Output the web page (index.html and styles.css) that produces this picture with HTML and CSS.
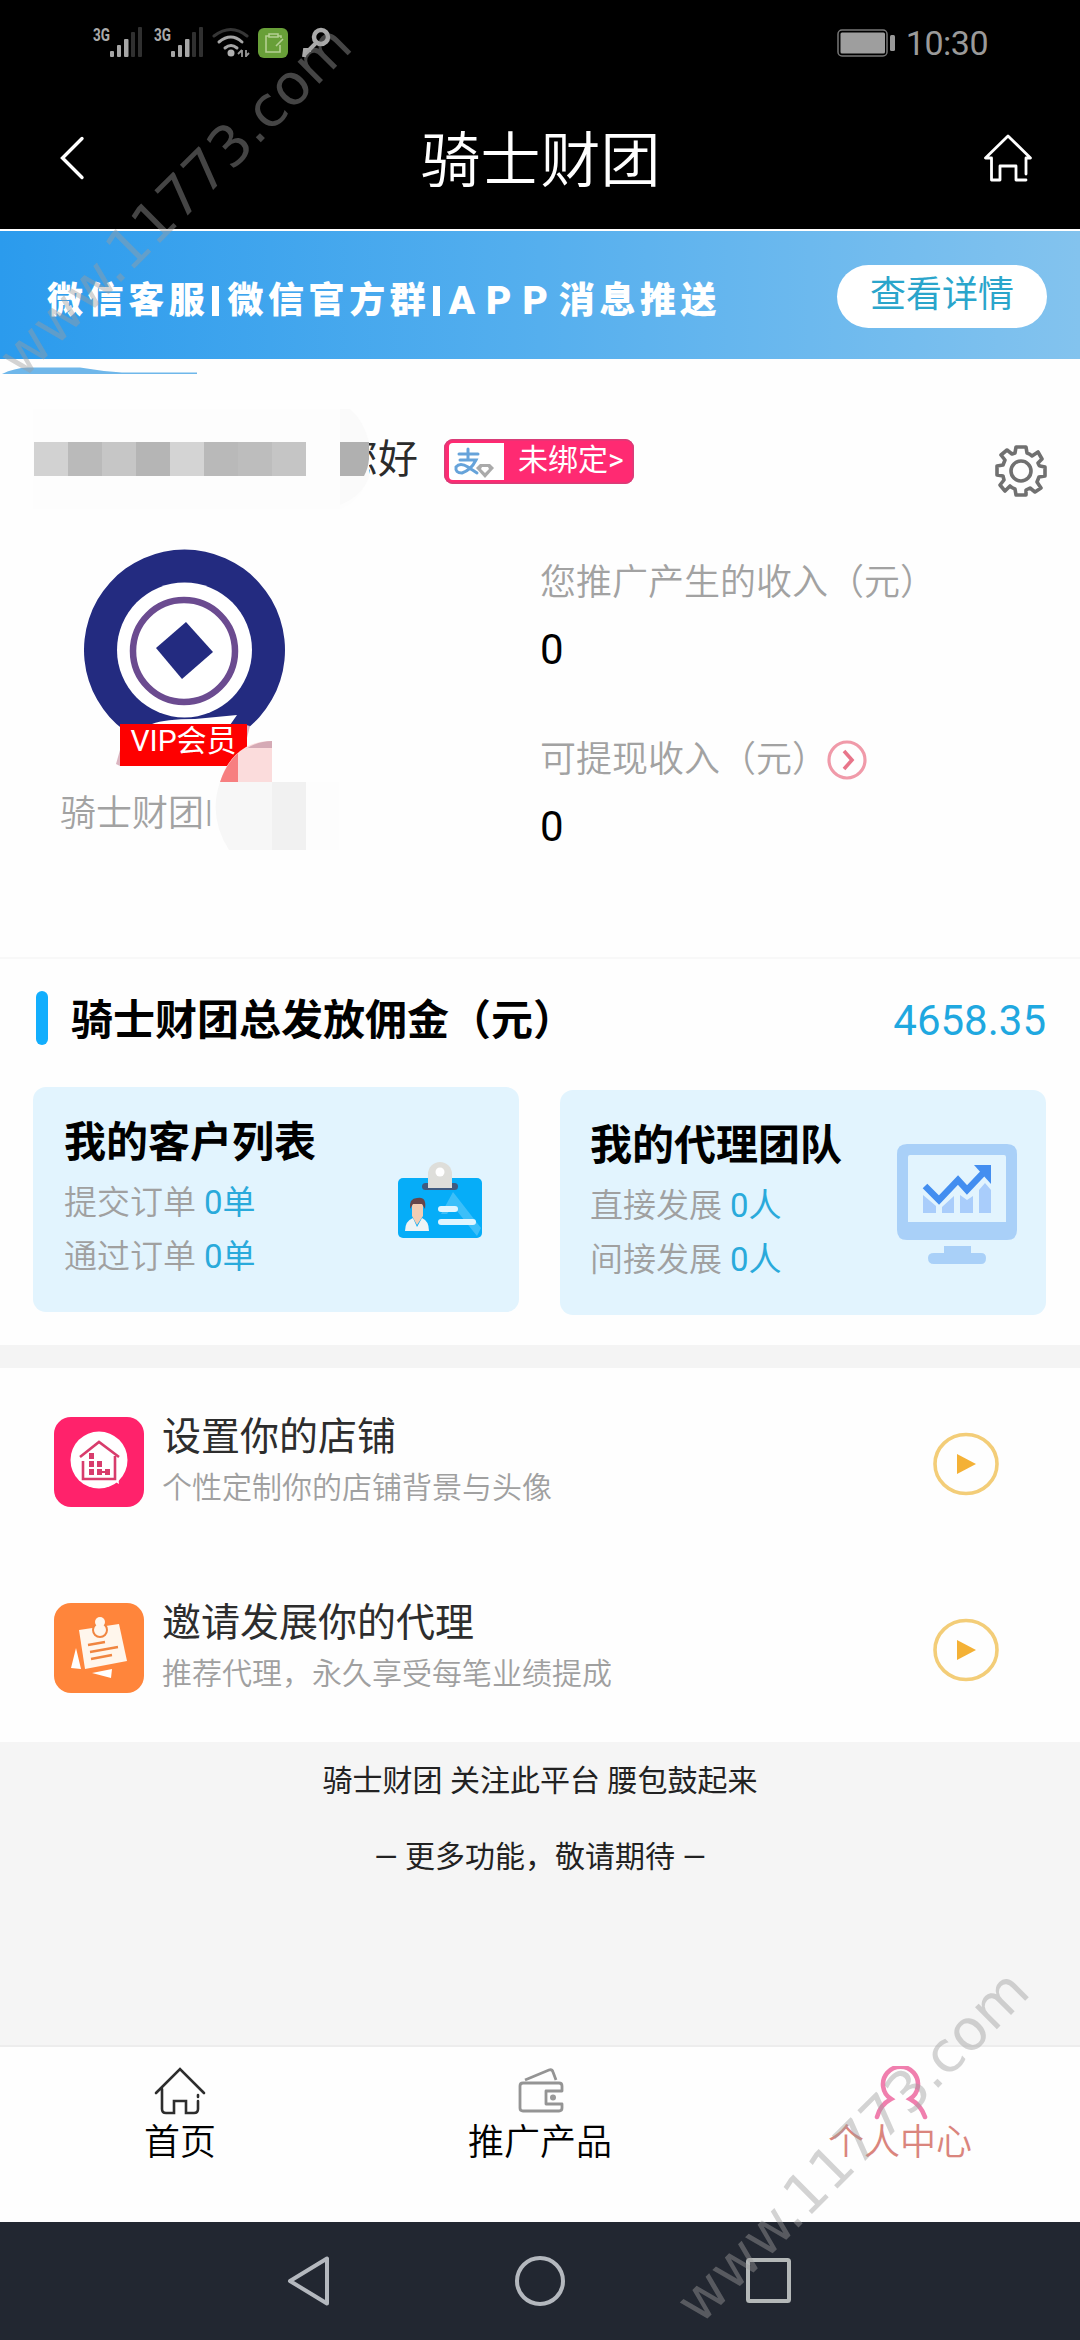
FILE: index.html
```html
<!DOCTYPE html>
<html lang="zh-CN">
<head>
<meta charset="utf-8">
<title>骑士财团</title>
<link rel="stylesheet" href="styles.css">
</head>
<body>
<div class="screen">
  <div class="status">
    <svg class="status-icons" width="256" height="40" viewBox="90 22 256 40">
      <g fill="#aaa" font-family="Roboto" font-size="19" font-weight="700">
        <text x="93" y="41" textLength="17" lengthAdjust="spacingAndGlyphs">3G</text>
        <text x="154" y="41" textLength="17" lengthAdjust="spacingAndGlyphs">3G</text>
      </g>
      <g fill="#a6a6a6">
        <rect x="110" y="51" width="4" height="6" rx="1"/><rect x="117" y="45" width="4" height="12" rx="1"/><rect x="124" y="39" width="4.500" height="18" rx="1"/>
        <rect x="171" y="51" width="4" height="6" rx="1"/><rect x="178" y="45" width="4" height="12" rx="1"/><rect x="185" y="39" width="4.500" height="18" rx="1"/>
      </g>
      <g fill="#303030">
        <rect x="131" y="32" width="4" height="25" rx="1"/><rect x="138" y="27" width="4" height="30" rx="1"/>
        <rect x="192" y="32" width="4" height="25" rx="1"/><rect x="199" y="27" width="4" height="30" rx="1"/>
      </g>
      <g fill="none" stroke-width="3" stroke-linecap="round">
        <path d="M214 36Q231 23 247 36" stroke="#363636"/>
        <path d="M219 42Q231 32 242 42M225 48Q231 43 237 48" stroke="#a6a6a6"/>
      </g>
      <circle cx="231" cy="53" r="3.500" fill="#b0b0b0"/>
      <path d="M242 50v7M242 50l-4 4M246 50v7M246 56l3-3" stroke="#999" stroke-width="1.800" fill="none"/>
      <rect x="258" y="28" width="30" height="30" rx="6" fill="#689f38"/>
      <path d="M269 36h-3v16h14v-7M269 34h9v3h-9zM281 38v-2h-3M276 46l7-7" fill="none" stroke="#b4cf92" stroke-width="1.600"/>
      <circle cx="321" cy="37" r="7" fill="none" stroke="#aaa" stroke-width="4.500"/>
      <path d="M316 43l-12 12M311 50l-6 0-1 7" fill="none" stroke="#aaa" stroke-width="4"/>
    </svg>
    <div class="status-right">
      <svg width="59" height="28" viewBox="0 0 59 28"><rect x="1" y="1" width="49" height="26" rx="4" fill="none" stroke="#777" stroke-width="1.500"/><rect x="3.500" y="3.500" width="44.500" height="21" rx="1.500" fill="#9e9e9e"/><rect x="53" y="6" width="5" height="16" rx="1.500" fill="#999"/></svg>
      <span>10:30</span>
    </div>
  </div>
  <header class="titlebar">
    <svg width="28" height="46" viewBox="0 0 28 46"><path d="M24 3.500L4.500 23L24 42.500" fill="none" stroke="#fff" stroke-width="3.400" stroke-linecap="round"/></svg>
    <h1>骑士财团</h1>
    <svg width="50" height="50" viewBox="0 0 50 50"><path d="M43 41V25H47.500L25 3L2.500 25H8.500V47H17V33H33V47H43" fill="none" stroke="#fff" stroke-width="2.800" stroke-linejoin="round" stroke-linecap="round"/></svg>
  </header>
  <div class="banner">
    <span class="banner-text">微信客服<i class="bar"></i>微信官方群<i class="bar"></i><span class="wide">APP</span>消息推送</span>
    <a class="detail">查看详情</a>
  </div>

  <section class="profile">
    <svg class="wave" width="200" height="8" viewBox="0 0 200 8"><path d="M2 7Q14 1 28 .5H80Q100 4 122 5.500H197V7Z" fill="#6fb7ea"/></svg>
    <div class="greeting">
      <span class="hello">您好
        <svg class="mask" width="341" height="104" viewBox="0 0 341 104">
          <path d="M0 0H310Q331 10 336 36V66Q330 90 308 100H0Z" fill="#fdfdfd"/>
          <path d="M307 0H317Q331 12 336 33V68Q329 87 307 96Z" fill="#fafafa"/>
          <g shape-rendering="crispEdges">
            <rect x="1" y="33" width="34" height="34" fill="#d2d2d2"/><rect x="35" y="33" width="34" height="34" fill="#bababa"/><rect x="69" y="33" width="34" height="34" fill="#c6c6c6"/><rect x="103" y="33" width="34" height="34" fill="#b5b5b5"/><rect x="137" y="33" width="34" height="34" fill="#d4d4d4"/><rect x="171" y="33" width="34" height="34" fill="#b9b9b9"/><rect x="205" y="33" width="34" height="34" fill="#bdbdbd"/><rect x="239" y="33" width="34" height="34" fill="#c5c5c5"/>
          </g>
          <path d="M307 33H336V50Q335 60 331 67H307Z" fill="#b0b0b0"/>
        </svg>
      </span>
      <span class="bind">
        <svg width="56" height="39" viewBox="0 0 56 39"><path d="M5 1H56V38H5Q1 38 1 34V5Q1 1 5 1Z" fill="#fff"/><g fill="none" stroke="#66a3da" stroke-width="3" stroke-linecap="round"><path d="M11 12H30M20 7V18M12 18H28Q23 28 14 31Q7 31 8 25Q12 20 20 25L29 31"/></g><path d="M32 22h10l4 4-9 10-9-10z" fill="#aaa"/><path d="M34 25h6l1 2-4 4-4-4z" fill="#fff"/></svg>
        <span>未绑定&gt;</span>
      </span>
      <svg class="gear" width="52" height="54" viewBox="-26 -27 52 54"><g fill="none" stroke="#707070" stroke-width="3.600" stroke-linejoin="round"><path d="M-5-24H5L6-18Q9-17 11-15L17-19L21-12L17-8Q18-5 19-5L24-4V5L18 6L16 11L20 17L14 21L9 17L5 19V24H-5L-6 18Q-9 17-11 15L-16 20L-21 14L-17 9L-18 5L-24 4V-5L-18-6L-16-11L-20-16L-14-21L-9-17L-6-18Z"/><circle r="10"/></g></svg>
    </div>
    <div class="summary">
      <div class="member">
        <div class="avatar">
          <svg width="202" height="218" viewBox="84 549 202 218">
            <path d="M125 731A100.500 100.500 0 1 1 244 731Z" fill="#232b80"/>
            <circle cx="184.500" cy="650" r="67.500" fill="#fff"/>
            <circle cx="184" cy="651" r="51" fill="none" stroke="#6b4b90" stroke-width="6.500"/>
            <path d="M186 622L213 652L182 679L156 648Z" fill="#232b80"/>
            <path d="M152 724Q165 719 195 719L237 715L230 725Z" fill="#fff"/>
            <path d="M120 750L116 764L120 766ZM246 725L250 726L246 742Z" fill="#dcb5c0"/>
          </svg>
          <span class="vip">VIP会员</span>
        </div>
        <div class="nick">骑士财团I</div>
        <svg class="mask2" width="128" height="112" viewBox="212 740 128 112">
          <path d="M246 747Q260 740 272 741V783H220Q226 759 246 747Z" fill="#fbdcdc"/>
          <path d="M246 749Q258 741 272 741V748H247Z" fill="#d5aab5"/>
          <path d="M238 753V782H220Q226 764 238 753Z" fill="#f77f80"/>
          <path d="M220 782H306V850H229Q208 817 220 782Z" fill="#f7f7f7"/>
          <path d="M272 782H306V850H272Z" fill="#f1f1f1"/>
          <path d="M306 782H339V850H306Z" fill="#fdfdfd"/>
        </svg>
      </div>
      <div class="income">
        <p>您推广产生的收入（元）</p>
        <b>0</b>
        <p>可提现收入（元）<svg width="42" height="42" viewBox="-21 -21 42 42"><circle r="18" fill="none" stroke="#f09aa9" stroke-width="3.200"/><path d="M-3-9L5 0L-3 9" fill="none" stroke="#e8758a" stroke-width="3.600"/></svg></p>
        <b>0</b>
      </div>
    </div>
  </section>

  <section class="team">
    <div class="total">
      <h2>骑士财团总发放佣金（元）</h2>
      <span>4658.35</span>
    </div>
    <div class="cards">
      <div class="card">
        <div>
          <h3>我的客户列表</h3>
          <p>提交订单 <em>0单</em></p>
          <p>通过订单 <em>0单</em></p>
        </div>
        <svg class="idcard" width="86" height="80" viewBox="398 1160 86 80">
          <rect x="399" y="1178" width="84" height="60" rx="5" fill="#06adf8"/>
          <rect x="423" y="1183" width="36" height="7" rx="3.500" fill="#3f5a80"/>
          <path d="M429 1188V1174A12 12 0 0 1 453 1174V1188Z" fill="#dededa"/><circle cx="441" cy="1172" r="4.500" fill="#fff"/>
          <path d="M406 1231Q406 1221 414 1218L418 1227L423 1218Q430 1221 430 1231Z" fill="#eef4f5"/>
          <path d="M413 1202H424V1216L418 1225L413 1216Z" fill="#f2cdb4"/>
          <path d="M411 1209Q410 1198 418 1198Q428 1196 426 1209L423 1204H414Z" fill="#67464b"/>
          <path d="M454 1192L482 1228L478 1236L454 1206L448 1214H442Z" fill="#fff" opacity=".22"/>
          <rect x="439" y="1206" width="20" height="6" rx="3" fill="#dff5ff"/><rect x="439" y="1219" width="38" height="6" rx="3" fill="#dff5ff"/>
        </svg>
      </div>
      <div class="card card-right">
        <div>
          <h3>我的代理团队</h3>
          <p>直接发展 <em>0人</em></p>
          <p>间接发展 <em>0人</em></p>
        </div>
        <svg class="monitor" width="120" height="121" viewBox="897 1144 120 121">
          <path fill="#a9d0f8" fill-rule="evenodd" d="M907 1144H1007Q1017 1144 1017 1154V1230Q1017 1240 1007 1240H907Q897 1240 897 1230V1154Q897 1144 907 1144ZM910 1155Q908 1155 908 1157V1222H1006V1157Q1006 1155 1004 1155Z"/>
          <path fill="#a9d0f8" d="M944 1246H971V1253H981Q986 1253 986 1258Q986 1264 981 1264H934Q928 1264 928 1258Q928 1253 934 1253H944Z"/>
          <path fill="#a9cdfb" d="M923 1195L936 1206V1213H923ZM942 1207L954 1196V1213H942ZM960 1195L967 1200L973 1196V1213H960ZM979 1190L985 1183L991 1190V1213H979Z"/>
          <path d="M925 1186L939 1200L958 1180L967 1190L986 1170" fill="none" stroke="#438ef0" stroke-width="6.500"/>
          <path d="M974 1165H991V1184Z" fill="#438ef0"/>
        </svg>
      </div>
    </div>
  </section>

  <section class="actions">
    <div class="action">
      <svg width="90" height="90" viewBox="0 0 90 90"><rect width="90" height="90" rx="17" fill="#ff226b"/><circle cx="45" cy="43" r="28.500" fill="#fff"/><path d="M58 63L65 67L64 58Z" fill="#fff"/><g fill="none" stroke="#d83c6c" stroke-width="2.600"><path d="M26 40L45 25L65 40"/><path d="M29 44V62H61V39"/></g><path fill="#d83c6c" d="M35 36h5v6h-5zM35 44h5v6h-5zM43 44h5v6h-5zM35 52h5v6h-5zM43 52h5v6h-5zM51 52h5v6h-5zM46 54h8v2h-8z"/></svg>
      <div class="action-text"><strong>设置你的店铺</strong><span>个性定制你的店铺背景与头像</span></div>
      <svg class="play" width="66" height="64" viewBox="-33 -32 66 64"><ellipse rx="31" ry="29.500" fill="none" stroke="#f3cd78" stroke-width="3.600"/><path d="M-9-10V10L10 0Z" fill="#f4b136"/></svg>
    </div>
    <div class="action">
      <svg width="90" height="90" viewBox="0 0 90 90"><rect width="90" height="90" rx="17" fill="#ff853b"/><path d="M22 45L17 65L27 66ZM38 70L58 66L57 75Z" fill="#fff"/><path d="M25 27L65 21L73 58L31 66Z" fill="#fff6ec"/><g fill="none" stroke="#f08540" stroke-width="2.300"><path d="M34 42L51 39M36 49L64 44M37 56L58 52"/></g><circle cx="46" cy="27" r="7" fill="#fff6ec" stroke="#f08540" stroke-width="2"/><circle cx="46" cy="19" r="5" fill="#fff6ec"/></svg>
      <div class="action-text"><strong>邀请发展你的代理</strong><span>推荐代理，永久享受每笔业绩提成</span></div>
      <svg class="play" width="66" height="64" viewBox="-33 -32 66 64"><ellipse rx="31" ry="29.500" fill="none" stroke="#f3cd78" stroke-width="3.600"/><path d="M-9-10V10L10 0Z" fill="#f4b136"/></svg>
    </div>
  </section>

  <div class="notes">
    <p>骑士财团 关注此平台 腰包鼓起来</p>
    <p>— 更多功能，敬请期待 —</p>
  </div>

  <nav class="tabs">
    <a class="tab">
      <svg width="54" height="50" viewBox="154 2066 54 50"><path d="M157 2093L181 2069L205 2093M163 2089V2109Q163 2113 167 2113H175V2101H187V2113H195Q199 2113 199 2109V2101M199 2095V2097" fill="none" stroke="#2d2d2d" stroke-width="2.600" stroke-linecap="round"/></svg>
      <span>首页</span>
    </a>
    <a class="tab">
      <svg width="54" height="50" viewBox="514 2066 54 50"><g fill="none" stroke="#949494" stroke-width="2.800" stroke-linejoin="round"><path d="M526 2080L550 2070Q553 2069 554 2072L557 2080"/><path d="M563 2091V2086Q563 2083 560 2083H524Q521 2083 521 2086V2108Q521 2111 524 2111H560Q563 2111 563 2108V2104H547V2091Z"/></g><circle cx="554" cy="2097.500" r="3" fill="#999"/></svg>
      <span>推广产品</span>
    </a>
    <a class="tab active">
      <svg width="58" height="54" viewBox="870 2065 58 54"><path d="M876 2116Q879 2104 890 2098A17.500 17.500 0 1 1 909 2098Q920 2104 924 2116" fill="none" stroke="#f07fae" stroke-width="4.600" stroke-linecap="round"/></svg>
      <span>个人中心</span>
    </a>
  </nav>

  <div class="sysnav">
    <svg width="52" height="54" viewBox="0 0 52 54"><path d="M42 4.500V49.500L5 27Z" fill="none" stroke="#b4b8be" stroke-width="4" stroke-linejoin="round"/></svg>
    <svg width="52" height="54" viewBox="0 0 52 54"><circle cx="26" cy="27" r="23" fill="none" stroke="#b4b8be" stroke-width="4"/></svg>
    <svg width="52" height="54" viewBox="0 0 52 54"><rect x="5" y="6" width="41" height="41" rx="1.500" fill="none" stroke="#b4b8b8" stroke-width="4"/></svg>
  </div>

  <svg class="watermark" width="1080" height="2340" viewBox="0 0 1080 2340">
    <text transform="translate(188.500 214.500) rotate(-45)">www.11773.com</text>
    <text transform="translate(866 2160) rotate(-45)">www.11773.com</text>
  </svg>
</div>
</body>
</html>
```

FILE: styles.css
```css
* { box-sizing: border-box; }
body, h1, h2, h3, p { margin: 0; font-weight: 400; }
body {
  width: 1080px;
  height: 2340px;
  background: #fefefe;
  font-family: Roboto, "Noto Sans CJK SC", sans-serif;
  color: #000;
}
svg { display: block; flex: none; }
.screen {
  position: relative;
  display: flex;
  flex-direction: column;
  width: 1080px;
  height: 2340px;
  overflow: hidden;
}

.status {
  display: flex;
  justify-content: space-between;
  height: 86px;
  padding: 22px 92px 0 90px;
  background: #000;
}
.status-right {
  display: flex;
  align-items: center;
  gap: 10px;
  height: 42px;
  font-size: 34px;
  letter-spacing: -.5px;
  line-height: 42px;
  color: #9a9a9a;
}
.titlebar {
  display: flex;
  justify-content: space-between;
  height: 145px;
  padding: 45px 47px 0 58px;
  background: #000;
  border-bottom: 2px solid #fff;
  color: #fff;
}
.titlebar svg { margin-top: 2px; }
.titlebar svg:first-child { margin: 4px 12px 0 0; }
.titlebar h1 { font-size: 60px; line-height: 62px; font-weight: 350; }

.banner {
  display: flex;
  align-items: center;
  justify-content: space-between;
  height: 128px;
  padding: 3px 33px 0 47px;
  background: linear-gradient(90deg, #2b9bed, #55afee 50%, #83c3ee);
  color: #fff;
}
.banner-text {
  display: flex;
  align-items: center;
  font-size: 36px;
  font-weight: 900;
  letter-spacing: 4.600px;
  line-height: 40px;
  padding-top: 8px;
}
.wide { font-size: 39px; letter-spacing: 11px; }
.bar { width: 7px; height: 30px; margin: 0 8px 0 3px; background: #fff; }
.detail {
  width: 210px;
  height: 63px;
  border-radius: 32px;
  background: #fff;
  color: #2aa5cb;
  font-size: 36px;
  line-height: 60px;
  text-align: center;
}

.profile { height: 598px; padding-top: 8px; background: #fefefe; }
.greeting { display: flex; height: 120px; padding: 72px 33px 0 338px; margin-top: -8px; }
.hello { position: relative; width: 80px; font-size: 40px; line-height: 42px; color: #2b2b2b; }
.mask { position: absolute; left: -305px; top: -30px; }
.bind {
  display: flex;
  width: 190px;
  height: 45px;
  margin-left: 26px;
  padding: 3px 0 0 4px;
  border-radius: 9px;
  background: #ff2a72;
  box-shadow: inset 0 0 0 1.500px #d83d78;
  color: #fff;
  font-size: 30px;
  line-height: 35px;
}
.bind > span { margin-left: 14px; }
.gear { margin: 5px 0 0 auto; }
.summary { display: grid; grid-template-columns: 540px 540px; margin-top: 62px; }
.member { position: relative; }
.avatar { position: relative; width: 202px; height: 218px; margin-left: 84px; }
.vip {
  position: absolute;
  left: 36px;
  top: 175px;
  width: 127px;
  height: 42px;
  background: #fe0000;
  color: #fff;
  font-size: 30px;
  line-height: 34px;
  text-align: center;
}
.nick { margin: 22px 0 0 60px; font-size: 36px; line-height: 50px; font-weight: 350; color: #a2a2a2; }
.mask2 { position: absolute; left: 212px; top: 191px; }
.income p { display: flex; align-items: center; height: 50px; font-size: 36px; line-height: 50px; font-weight: 350; color: #a2a2a2; }
.income p:first-child { margin-top: 9px; }
.income b { display: block; height: 50px; margin: 17px 0 60px; font-size: 42px; line-height: 50px; font-weight: 400; }
.income p svg { margin-left: -2px; }

.team { height: 388px; padding: 32px 34px 0 33px; border-top: 2px solid #f8f8f8; }
.total { display: flex; justify-content: space-between; height: 54px; margin-left: 3px; line-height: 60px; font-size: 42px; }
.total h2 { display: flex; font-size: 42px; font-weight: 600; }
.total h2::before { content: ""; width: 12px; height: 54px; margin-right: 23px; border-radius: 6px; background: #12aefd; }
.total span { color: #1fa8e0; }
.cards { display: flex; justify-content: space-between; margin-top: 42px; }
.card {
  display: flex;
  justify-content: space-between;
  width: 486px;
  height: 225px;
  padding: 30px 36px 0 31px;
  border-radius: 13px;
  background: #e2f4fe;
}
.card-right { margin-top: 3px; padding-right: 29px; padding-left: 30px; }
.card h3 { font-size: 42px; font-weight: 600; line-height: 52px; margin-bottom: 7px; }
.card p { font-size: 33px; line-height: 54px; font-weight: 350; color: #a0a0a0; }
.card em { font-style: normal; font-weight: 400; color: #2aaadb; }
.idcard { margin-top: 43px; }
.monitor { margin-top: 24px; }

.actions { height: 397px; border-top: 23px solid #f4f4f4; }
.action { display: flex; height: 186px; padding: 49px 81px 0 54px; }
.action-text { display: flex; flex-direction: column; margin-left: 18px; font-size: 39px; line-height: 40px; color: #2d2d2d; }
.action-text strong { font-weight: 400; }
.action-text span { margin-top: 11px; font-size: 30px; font-weight: 350; color: #a0a0a0; }
.play { margin: 15px 0 0 auto; }

.notes { height: 303px; padding-top: 18px; background: #f5f5f5; text-align: center; font-size: 30px; line-height: 42px; font-weight: 350; color: #222; }
.notes p + p { margin-top: 34px; }

.tabs { display: grid; grid-template-columns: 1fr 1fr 1fr; height: 177px; border-top: 2px solid #ededed; }
.tab { display: flex; flex-direction: column; align-items: center; padding-top: 19px; font-size: 36px; line-height: 50px; font-weight: 350; }
.tab span { margin-top: 2px; }
.active { color: #da857d; }
.active span { margin-top: -2px; }

.sysnav { display: flex; justify-content: center; gap: 177px; height: 118px; padding-top: 32px; background: #222731; }

.watermark { position: absolute; left: 0; top: 0; }
.watermark text { font-family: "DejaVu Sans", sans-serif; font-size: 56.500px; text-anchor: middle; fill: rgba(156, 156, 156, .44); }
```
